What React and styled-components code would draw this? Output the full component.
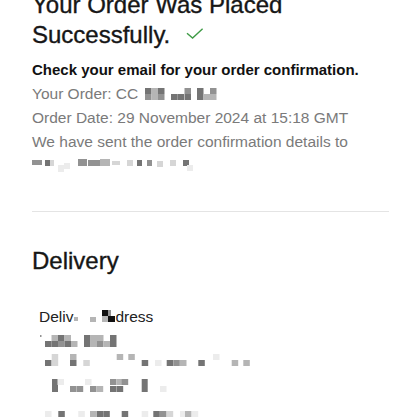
import styled, { createGlobalStyle } from 'styled-components';

const GlobalStyle = createGlobalStyle`
  html, body {
    margin: 0;
    padding: 0;
    background: #ffffff;
    overflow: hidden;
  }
  body {
    font-family: 'Liberation Sans', Arial, sans-serif;
  }
`;

const SHADES = {
  a: '#ececec',
  b: '#d6d6d6',
  c: '#b5b5b5',
  d: '#929292',
  e: '#747474',
  f: '#555555',
  g: '#111111',
};

// redacted (pixelated) text, drawn as blocks in page coordinates
const orderCells = [
  [147, 88, 'e'], [153.5, 88, 'c'], [160, 88, 'e'], [186.5, 88, 'd'], [199, 88, 'e'], [212, 88, 'd'],
  [147, 94, 'd'], [153.5, 94, 'c'], [160, 94, 'd'], [173, 94, 'e'], [179.5, 94, 'e'], [186.5, 94, 'e'],
  [199, 94, 'e'], [205.5, 94, 'c'], [212, 94, 'c'],
];

const emailCells = [
  [32, 160, 'd', 5, 5], [37, 160, 'd', 5, 5], [45, 160, 'e', 5, 6], [50, 160, 'b', 4, 6],
  [58, 165, 'a', 6, 7], [64, 163, 'a', 6, 6], [78, 159, 'd', 9, 7], [88, 160, 'd', 12, 6],
  [100, 159, 'c', 10, 7], [112, 161, 'b', 8, 4], [127, 160, 'b', 6, 6], [137, 160, 'e', 5, 6],
  [147, 160, 'd', 5, 6], [157, 161, 'b', 6, 6], [170, 160, 'b', 6, 6], [183, 160, 'e', 6, 6],
  [187, 165, 'a', 6, 6],
];

const labelCells = [
  [74, 316, 'c', 4, 4], [90, 316, 'c', 6, 5], [102, 309, 'g', 6, 6], [102, 315, 'c', 6, 6],
  [108, 315, 'g', 7, 6], [108, 309, 'd', 3, 6],
];

const addressCells = [
  [40, 336, 'd', 1.5, 2],
  [51.5, 336, 'c'], [58, 336, 'e'], [64.5, 336, 'c'], [84, 336, 'e'], [90.5, 336, 'c'], [97, 336, 'c'], [110, 336, 'e'],
  [45, 342, 'e'], [51.5, 342, 'e'], [58, 342, 'd'], [64.5, 342, 'e'], [71, 342, 'c'], [84, 342, 'e'],
  [90.5, 342, 'c'], [97, 342, 'd'], [103.5, 342, 'c'], [110, 342, 'e'],
  [51.7, 355, 'b'], [70, 355, 'c'], [116.7, 355, 'c'], [128.3, 355, 'c'], [213, 355, 'a'],
  [45, 361, 'e'], [51.7, 361, 'b'], [70, 361, 'e'], [83.3, 361, 'b'], [141.7, 361, 'e'], [155, 361, 'a'],
  [166.7, 361, 'e'], [173.3, 361, 'd'], [180, 361, 'c'], [198.3, 361, 'e'], [231.7, 361, 'c'], [243.3, 361, 'c'],
  [52, 380, 'e', 6, 13], [57.5, 380, 'a'], [85, 380, 'a'], [110, 380, 'd'], [116.7, 380, 'c'], [121.7, 380, 'd'],
  [141.7, 380, 'e', 6, 13],
  [70, 387, 'd'], [76.7, 387, 'd'], [90, 387, 'd'], [96.7, 387, 'c'], [110, 387, 'e'], [116.7, 387, 'e'], [160, 387, 'a'],
  [45, 412, 'a'], [58.3, 412, 'e'], [78.3, 412, 'a'], [90, 412, 'c'], [96.7, 412, 'e'], [103.3, 412, 'e'],
  [121.7, 412, 'e'], [141.7, 412, 'a'], [153.3, 412, 'e'], [160, 412, 'd'], [166.7, 412, 'b'],
  [180, 412, 'a'], [185, 412, 'c'], [191.7, 412, 'a'],
];

function Mosaic({ cells, x, y, width, height, className }) {
  return (
    <svg className={className} width={width} height={height} viewBox={`0 0 ${width} ${height}`}>
      {cells.map(([cx, cy, shade, w = 6.5, h = 6], i) => (
        <rect key={i} x={cx - x} y={cy - y} width={w} height={h} fill={SHADES[shade]} />
      ))}
    </svg>
  );
}

function CheckMark() {
  return (
    <CheckIcon width="18" height="11" viewBox="0 0 18 11">
      <path d="M1 5.2 L6.6 10 L16.6 0.8" fill="none" stroke="#3f9b46" strokeWidth="1.4" />
    </CheckIcon>
  );
}

function App() {
  return (
    <>
      <GlobalStyle />
      <Page>
        <Confirmation>
          <Title>
            Your Order Was Placed Successfully.
            <CheckMark />
          </Title>
          <Notice>Check your email for your order confirmation.</Notice>
          <Details>
            <DetailLine>
              Your Order: CC
              <InlineMosaic cells={orderCells} x={146} y={88} width={80} height={12} />
            </DetailLine>
            <DetailLine>Order Date: 29 November 2024 at 15:18 GMT</DetailLine>
            <DetailLine>We have sent the order confirmation details to</DetailLine>
            <DetailLine>
              <Mosaic cells={emailCells} x={32} y={154} width={200} height={24} />
            </DetailLine>
          </Details>
        </Confirmation>
        <Divider />
        <Delivery>
          <SectionTitle>Delivery</SectionTitle>
          <AddressLabel>
            Deliv
            <InlineMosaic cells={labelCells} x={73} y={309} width={42} height={14} />
            dress
          </AddressLabel>
          <Mosaic cells={addressCells} x={32} y={330} width={230} height={92} />
        </Delivery>
      </Page>
    </>
  );
}

const Page = styled.div`
  display: flex;
  flex-direction: column;
  padding: 0 31px 0 32px;
  margin-top: -10px;
  color: #1a1a1a;
`;

const Confirmation = styled.section`
  display: flex;
  flex-direction: column;
`;

const Title = styled.h1`
  margin: 0;
  font-size: 24px;
  line-height: 30px;
  font-weight: 400;
  color: #161616;
  -webkit-text-stroke: 0.35px #161616;
`;

const CheckIcon = styled.svg`
  margin-left: 16px;
  vertical-align: 4px;
  -webkit-text-stroke: 0;
`;

const Notice = styled.p`
  margin: 10px 0 0;
  font-size: 15px;
  line-height: 20px;
  font-weight: 700;
  color: #111111;
`;

const Details = styled.div`
  display: flex;
  flex-direction: column;
  margin-top: 2px;
`;

const DetailLine = styled.div`
  display: flex;
  align-items: baseline;
  height: 24px;
  font-size: 15.5px;
  line-height: 24px;
  color: #7a7a7a;
  white-space: nowrap;
`;

const InlineMosaic = styled(Mosaic)`
  margin-left: 6px;
  align-self: center;
`;

const Divider = styled.hr`
  margin: 33px 0 0;
  border: 0;
  border-top: 1px solid #e4e4e4;
`;

const Delivery = styled.section`
  display: flex;
  flex-direction: column;
`;

const SectionTitle = styled.h2`
  margin: 34px 0 0;
  font-size: 24px;
  line-height: 30px;
  font-weight: 400;
  color: #161616;
  -webkit-text-stroke: 0.35px #161616;
`;

const AddressLabel = styled.div`
  display: flex;
  align-items: center;
  margin: 29px 0 0 7px;
  height: 24px;
  font-size: 15.5px;
  line-height: 24px;
  color: #222222;
  white-space: nowrap;

  svg {
    margin: 0;
  }
`;

export default App;
